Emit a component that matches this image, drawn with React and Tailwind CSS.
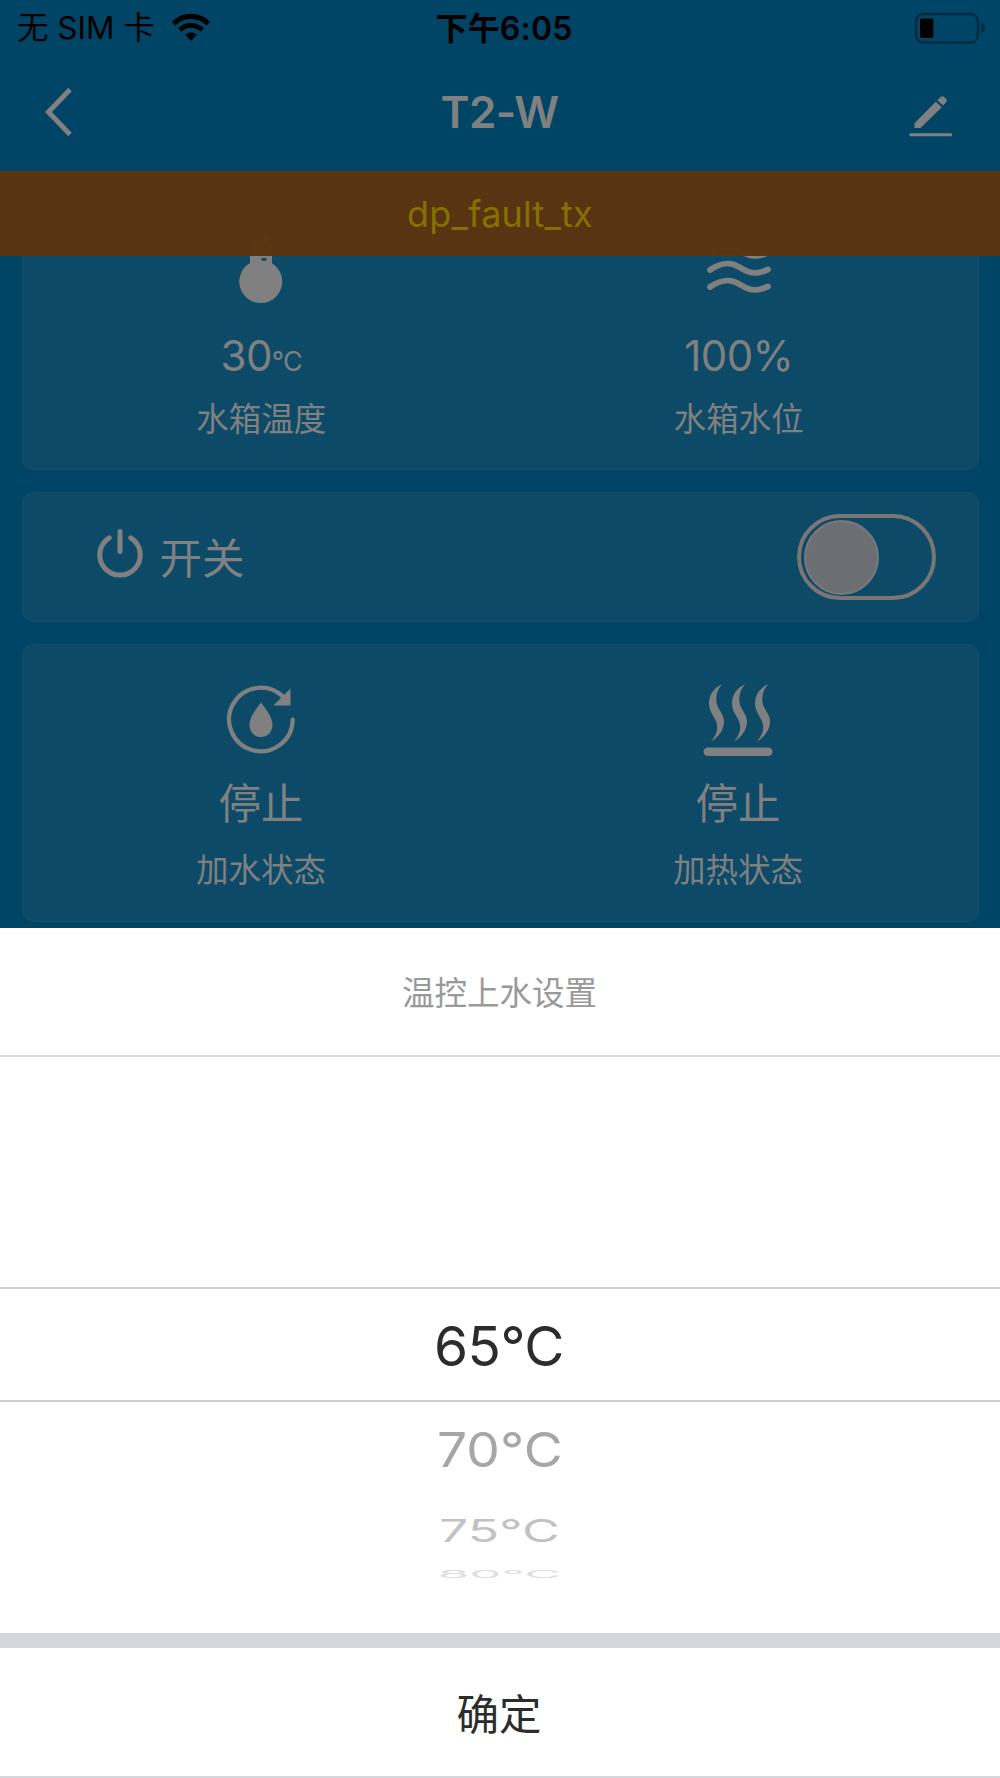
function WifiIcon() {
  return (
    <svg className="ml-[16px] h-[30px] w-[40px]" viewBox="0 0 40 30" fill="none">
      <path d="M2.6 10.6a24.5 24.5 0 0 1 34.8 0" stroke="#000" strokeWidth="5.2" />
      <path d="M8.8 17a16 16 0 0 1 22.4 0" stroke="#000" strokeWidth="4.8" />
      <path d="M14.2 21.8a8.6 8.6 0 0 1 11.6 0L20 28z" fill="#000" />
    </svg>
  );
}

function BatteryIcon() {
  return (
    <svg className="h-[32px] w-[72px]" viewBox="0 0 72 32" fill="none">
      <rect x="2" y="2" width="62" height="28.5" rx="7.5" stroke="#002b42" strokeWidth="2.4" />
      <rect x="6" y="6.5" width="13.3" height="19.5" rx="1.5" fill="#000" />
      <path d="M67 11c2.6 1 4 3 4 5.2s-1.4 4.2-4 5.2z" fill="#002b42" />
    </svg>
  );
}

function EditIcon() {
  return (
    <svg className="mt-[7px] h-[44px] w-[44px]" viewBox="0 0 44 44" fill="#808080">
      <path d="M5.5 29.2 26.8 7.7l6 5.5L11.5 34H5.5z" />
      <path d="M28.3 6.2l3-3c1.3-1.2 2.7-1.2 4 0l1.6 1.6c1.2 1.3 1.2 2.5 0 3.8l-2.9 3z" />
      <rect x="0.5" y="39.3" width="42.5" height="2.9" rx="0.8" />
    </svg>
  );
}

function ThermometerIcon() {
  return (
    <svg className="h-[70px] w-[44px]" viewBox="0 0 44 70">
      <path d="M11 28V11.5a11 11 0 0 1 22 0V28.3A21.5 21.5 0 1 1 11 28z" fill="#808080" />
      <path d="M22.5 11.5h5M22.5 18h5M22.5 24.3h5" stroke="#0d4a68" strokeWidth="2.8" />
    </svg>
  );
}

function WavesIcon() {
  return (
    <svg
      className="h-[70px] w-[66px]"
      viewBox="0 0 66 70"
      fill="none"
      stroke="#808080"
      strokeWidth="5.8"
      strokeLinecap="round"
    >
      <path d="M4 18C15 10.500 24 9 34 15.500S51 22.500 62 17.500" />
      <path d="M4 35C15 27.500 24 26 34 32.500S51 39.500 62 34.500" />
      <path d="M4 52C15 44.500 24 43 34 49.500S51 56.500 62 51.500" />
    </svg>
  );
}

function PowerIcon() {
  return (
    <svg
      className="mb-[9px] h-[50px] w-[46px]"
      viewBox="0 0 46 50"
      fill="none"
      stroke="#808080"
      strokeWidth="5"
      strokeLinecap="round"
    >
      <path d="M12.2 9.8a20.2 20.2 0 1 0 21.6 0" />
      <path d="M23 3.5v20" />
    </svg>
  );
}

function RefillIcon() {
  return (
    <svg className="h-[70px] w-[70px]" viewBox="0 0 70 70" fill="none">
      <path
        d="M66.7 34.5A31.8 31.8 0 1 1 57 11.6"
        stroke="#808080"
        strokeWidth="4.2"
        strokeLinecap="round"
      />
      <path d="M64.5 3.5V20.5H47.3z" fill="#808080" />
      <path
        d="M35 17.5c4 5.5 11.5 14 11.5 22.5 0 7-5 12-11.5 12s-11.5-5-11.5-12c0-8.500 7.500-17 11.500-22.500z"
        fill="#808080"
      />
    </svg>
  );
}

function HeatIcon() {
  return (
    <svg className="h-[74px] w-[70px]" viewBox="0 0 70 74" fill="#808080">
      {[0, 23, 46].map((x) => (
        <path
          key={x}
          transform={`translate(${x} 0)`}
          d="M19.5 1C10.5 5 6 12 6 20.5C6 31 14.2 35 14.2 44C14.2 50 11.5 54 8 58.5C15.5 54 21 47 21 38.5C21 30 13.3 26 13.3 17C13.3 10 15.5 5 19.5 1z"
        />
      ))}
      <rect x="0.5" y="64.5" width="69" height="8.6" rx="4.3" />
    </svg>
  );
}

function StatusItem({ icon, value, label }) {
  return (
    <div className="flex flex-1 flex-col items-center">
      {icon}
      <div className="mt-[16px] flex h-[70px] items-center text-[42px] leading-none tracking-[-0.6px]">
        {value}
      </div>
      <div className="mt-[5px] flex h-[48px] items-center text-[32.5px] leading-none">{label}</div>
    </div>
  );
}

const card = 'rounded-[11px] border border-[#164c67] bg-[#0d4a68]';

function App() {
  return (
    <div className="flex h-[1778px] w-[1000px] flex-col overflow-hidden bg-[#004466] font-['Inter','Noto_Sans_CJK_SC',sans-serif] text-[#808080]">
      {/* Status bar */}
      <div className="grid h-[55px] grid-cols-3 items-center pr-[14px] pl-[17px] text-black">
        <div className="flex items-center text-[31.5px] leading-none font-normal whitespace-nowrap">
          无 SIM 卡
          <WifiIcon />
        </div>
        <div className="pt-[2px] pl-[5px] text-center text-[32px] leading-none font-semibold tracking-[0.2px] whitespace-nowrap">
          下午6:05
        </div>
        <div className="flex justify-end">
          <BatteryIcon />
        </div>
      </div>

      {/* Nav bar */}
      <div className="flex h-[116px] items-center justify-between pr-[47px] pb-[2px] pl-[44px]">
        <svg className="h-[50px] w-[44px]" viewBox="0 0 44 50" fill="none">
          <path d="M26 2.5 4.5 25 26 47.5" stroke="#808080" strokeWidth="5" />
        </svg>
        <h1 className="pl-[2px] text-[44px] leading-none font-semibold tracking-[-0.6px]">T2-W</h1>
        <EditIcon />
      </div>

      <div className="relative h-[757px] overflow-hidden px-[21.5px] pt-[20px]">
        {/* Fault banner, lies over the first card */}
        <div className="absolute inset-x-0 top-0 flex h-[85px] items-center justify-center bg-[#5b3410]/97 text-[36px] leading-none tracking-[0.2px] text-[#857000]">
          dp_fault_tx
        </div>

        <div className={`${card} flex h-[279px] pt-[43px]`}>
          <StatusItem
            icon={<ThermometerIcon />}
            value={
              <span>
                30<span className="text-[27px] tracking-[-0.8px]">°C</span>
              </span>
            }
            label="水箱温度"
          />
          <StatusItem icon={<WavesIcon />} value="100%" label="水箱水位" />
        </div>

        <div className={`${card} mt-[22px] flex h-[130px] items-center pr-[42px] pl-[74px]`}>
          <PowerIcon />
          <span className="ml-[17px] flex-1 pt-[5px] text-[42.5px] leading-none">开关</span>
          <div className="h-[86px] w-[139px] rounded-full border-4 border-[#7b7674] p-[2px] pl-[3px]">
            <div className="h-[75px] w-[75px] rounded-full border-2 border-[#77787a] bg-[#6b6f74]" />
          </div>
        </div>

        <div className={`${card} mt-[22px] flex h-[278px] pt-[40px]`}>
          <div className="flex flex-1 flex-col items-center">
            <RefillIcon />
            <div className="mt-[14px] flex h-[70px] items-center text-[42.5px] leading-none">停止</div>
            <div className="mt-[8px] flex h-[48px] items-center text-[32.5px] leading-none">加水状态</div>
          </div>
          <div className="-mt-[2px] flex flex-1 flex-col items-center pr-[1px]">
            <HeatIcon />
            <div className="mt-[12px] flex h-[70px] items-center text-[42.5px] leading-none">停止</div>
            <div className="mt-[8px] flex h-[48px] items-center text-[32.5px] leading-none">加热状态</div>
          </div>
        </div>
      </div>

      {/* Bottom sheet */}
      <div className="flex flex-1 flex-col bg-white text-[#2c2c2c]">
        <div className="flex h-[129px] items-center justify-center border-b-2 border-[#d9d8df] pt-[5px] pr-[1px] text-[32.5px] leading-none text-[#999]">
          温控上水设置
        </div>

        {/* Wheel picker */}
        <div className="flex h-[576px] flex-col items-center pt-[230px] text-[55px] leading-none">
          <div className="flex h-[115px] w-full items-center justify-center border-y-2 border-[#cfcfcf] pt-[3px] pr-[2px] tracking-[-0.6px]">
            65°C
          </div>
          <div className="mt-[18px] flex h-[60px] scale-x-[0.97] scale-y-[0.87] items-center pr-[1px] text-[#a6a6a6]">
            70°C
          </div>
          <div className="mt-[21px] flex h-[60px] scale-x-[0.94] scale-y-[0.57] items-center pr-[2px] text-[#c2c2c2]">
            75°C
          </div>
          <div className="mt-[-17px] flex h-[60px] scale-x-[0.93] scale-y-[0.2] items-center pr-[1px] text-[#dedede]">
            80°C
          </div>
        </div>

        <div className="h-[15px] bg-[#d6d6df]" />
        <button className="flex-1 border-b-2 border-[#d6d6df] pt-[6px] pr-[2px] text-[42.5px] leading-none">
          确定
        </button>
      </div>
    </div>
  );
}

export default App;
